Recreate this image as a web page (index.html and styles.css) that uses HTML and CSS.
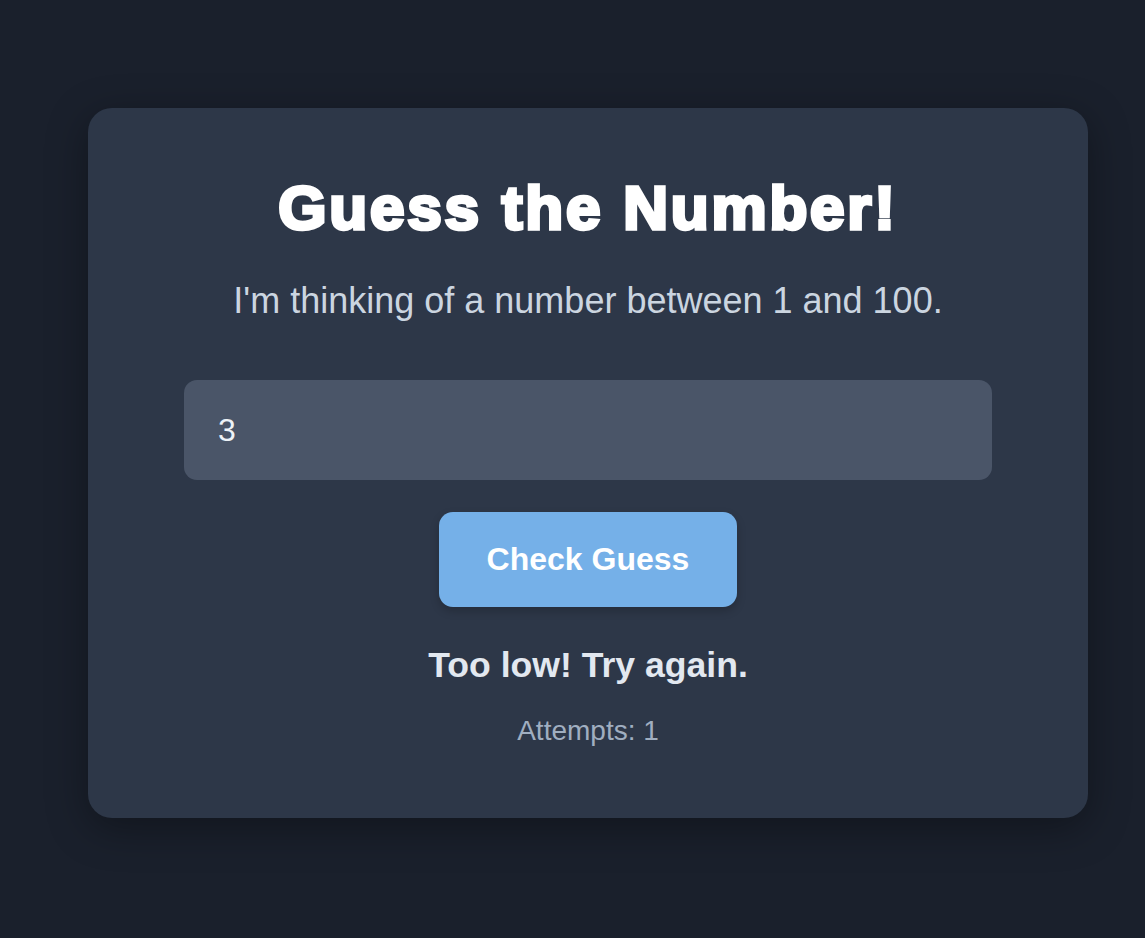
FILE: index.html
```html
<!DOCTYPE html>
<html lang="en">
<head>
<meta charset="utf-8">
<title>Guess the Number!</title>
<link rel="stylesheet" href="styles.css">
</head>
<body>
<main class="page">
  <section class="card">
    <h1 class="title">Guess the Number!</h1>
    <p class="subtitle">I'm thinking of a number between 1 and 100.</p>
    <input class="guess-input" type="number" value="3">
    <button class="guess-btn" type="button">Check Guess</button>
    <p class="message">Too low! Try again.</p>
    <p class="attempts">Attempts: 1</p>
  </section>
</main>
</body>
</html>
```
FILE: styles.css
```css
html, body {
  margin: 0;
  padding: 0;
  background: #1a202c;
  min-height: 100%;
}

body {
  font-family: "Liberation Sans", Arial, sans-serif;
  min-height: 938px;
}

.page {
  display: flex;
  padding: 108px 57px 0 88px;
}

.card {
  box-sizing: border-box;
  width: 1000px;
  padding: 64px 96px 71px;
  background: #2d3748;
  border-radius: 24px;
  box-shadow: 0 10px 40px rgba(0, 0, 0, 0.35);
  display: flex;
  flex-direction: column;
  align-items: center;
  text-align: center;
}

.title {
  margin: 0 0 35px;
  font-size: 62px;
  line-height: 72px;
  font-weight: 700;
  letter-spacing: 2.8px;
  color: #ffffff;
  -webkit-text-stroke: 3.6px #ffffff;
  white-space: nowrap;
}

.subtitle {
  margin: 0 0 58px;
  font-size: 36px;
  line-height: 1.2;
  color: #cbd5e0;
}

.guess-input {
  box-sizing: border-box;
  width: 100%;
  height: 100px;
  padding: 0 34px;
  border: 0;
  border-radius: 13px;
  background: #4a5568;
  color: #edf2f7;
  font-family: "Liberation Sans", Arial, sans-serif;
  font-size: 32px;
  outline: none;
  -moz-appearance: textfield;
  appearance: textfield;
}

.guess-input::-webkit-inner-spin-button,
.guess-input::-webkit-outer-spin-button {
  -webkit-appearance: none;
  margin: 0;
}

.guess-btn {
  margin-top: 32px;
  box-sizing: border-box;
  height: 95px;
  padding: 0 48px;
  border: 0;
  border-radius: 14px;
  background: #75b0e8;
  color: #ffffff;
  font-family: "Liberation Sans", Arial, sans-serif;
  font-size: 32px;
  font-weight: 700;
  box-shadow: 0 4px 10px rgba(0, 0, 0, 0.2);
  cursor: pointer;
}

.message {
  margin: 37px 0 0;
  font-size: 35.6px;
  line-height: 1.2;
  font-weight: 700;
  color: #e2e8f0;
}

.attempts {
  margin: 27px 0 0;
  font-size: 28px;
  line-height: 1.2;
  color: #a0aec0;
}
```
